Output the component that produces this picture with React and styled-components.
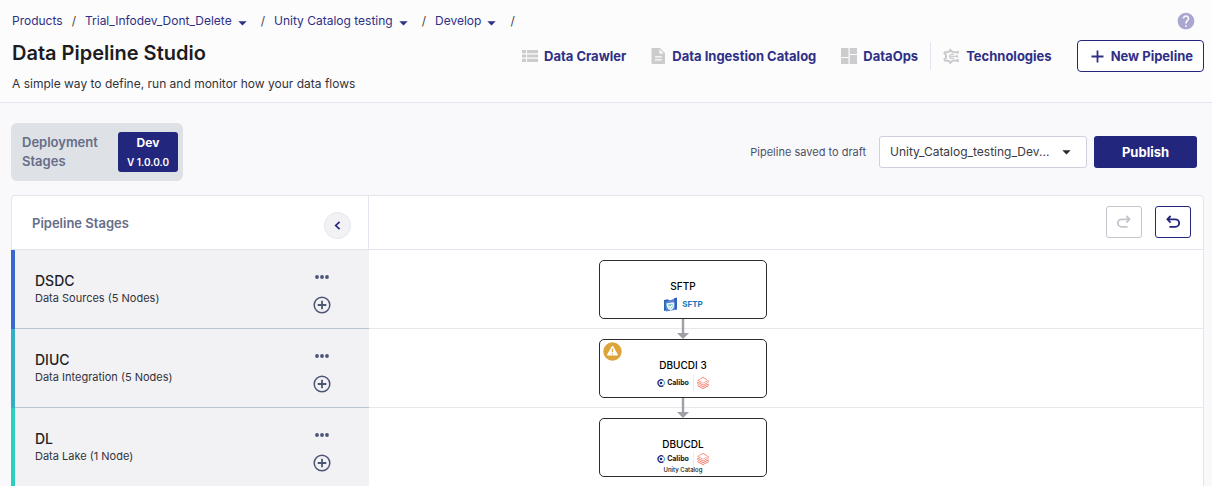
import React from 'react'
import styled, { createGlobalStyle, ThemeProvider } from 'styled-components'
import { MdHelp } from 'react-icons/md'
import { SiDatabricks } from 'react-icons/si'

const theme = {
  primary: '#23267d',
  link   : '#2f2f86',
  text   : '#1c1c22',
  muted  : '#666d88',
  icon   : '#4d5575',
  line   : '#e3e4ee',
  page   : '#f9f9fc'
}

const GlobalStyle = createGlobalStyle`
  * {
    box-sizing: border-box;
  }
  body {
    margin: 0;
    background: ${theme.page};
    color: ${theme.text};
    font-family: Inter, 'Liberation Sans', sans-serif;
  }
  button, select {
    font-family: inherit;
    cursor: pointer;
  }
  h1, h2, p, ol, ul {
    margin: 0;
    padding: 0;
  }
  svg {
    display: block;
    flex: none;
  }
`

const Page = styled.div`
  height: 100vh;
  display: flex;
  flex-direction: column;
  overflow: hidden;
`,
  Header = styled.header`
    flex: none;
    padding: 12px 8px 9px 12px;
    background: #fcfcfd;
    border-bottom: 1px solid ${theme.line};
  `,
  HeaderTop = styled.div`
    display: flex;
    justify-content: space-between;
    align-items: center;
    height: 18px;
    padding-right: 8px;
  `,
  Crumbs = styled.ol`
    display: flex;
    align-items: center;
    list-style: none;
    white-space: nowrap;
    font-size: 12px;
    line-height: 18px;
  `,
  Crumb = styled.li`
    display: flex;
    align-items: center;
  `,
  CrumbLink = styled.a`
    color: ${props => props.theme.link};
    text-decoration: none;
  `,
  CrumbMenu = styled.button`
    display: flex;
    padding: 4px 5px 0 6px;
    border: 0;
    background: none;
    color: ${props => props.theme.link};
  `,
  Slash = styled.span`
    margin: 0 9px;
    color: #44444c;
  `,
  HelpButton = styled.button`
    display: flex;
    padding: 0;
    border: 0;
    background: none;
    color: #a9a7cf;
  `,
  HeaderMain = styled.div`
    display: flex;
    justify-content: space-between;
    align-items: flex-start;
    padding-top: 10px;
  `,
  Title = styled.h1`
    font-size: 20px;
    font-weight: 600;
    line-height: 26px;
  `,
  Subtitle = styled.p`
    padding-top: 9px;
    font-size: 12px;
    line-height: 18px;
    color: #33333b;
  `,
  Tools = styled.nav`
    display: flex;
    align-items: center;
    gap: 25px;
  `,
  ToolLink = styled.a`
    display: flex;
    align-items: center;
    gap: 6px;
    font-size: 13px;
    font-weight: 700;
    color: ${props => props.theme.link};
    text-decoration: none;
    white-space: nowrap;

    svg {
      color: #cccccf;
    }
  `,
  ToolPair = styled.div`
    display: flex;
    align-items: center;
    gap: 12px;
  `,
  ToolDivider = styled.span`
    width: 1px;
    height: 28px;
    background: ${props => props.theme.line};
  `,
  NewButton = styled.button`
    display: flex;
    align-items: center;
    gap: 7px;
    height: 32px;
    padding: 0 10px 0 13px;
    border: 1px solid ${props => props.theme.primary};
    border-radius: 4px;
    background: #fff;
    color: ${props => props.theme.link};
    font-size: 13px;
    font-weight: 700;
    white-space: nowrap;
  `

const ActionBar = styled.section`
  flex: none;
  display: flex;
  justify-content: space-between;
  align-items: center;
  padding: 20px 15px 14px 11px;
`,
  Deployment = styled.div`
    display: flex;
    align-items: center;
    gap: 22px;
    height: 58px;
    padding: 0 5px 0 11px;
    border-radius: 6px;
    background: #dee1e6;
  `,
  DeploymentLabel = styled.span`
    width: 74px;
    font-size: 13px;
    font-weight: 600;
    line-height: 19px;
    color: ${props => props.theme.muted};
  `,
  StageButton = styled.button`
    display: flex;
    flex-direction: column;
    align-items: center;
    width: 60px;
    height: 40px;
    padding: 2px 0;
    border: 0;
    border-radius: 3px;
    background: ${props => props.theme.primary};
    color: #fff;
    font-size: 12px;
    font-weight: 700;
    line-height: 18px;
  `,
  StageVersion = styled.span`
    font-size: 10px;
    font-weight: 600;
    line-height: 20px;
  `,
  Actions = styled.div`
    display: flex;
    align-items: center;
    gap: 7px;
  `,
  SavedNote = styled.span`
    padding-right: 6px;
    font-size: 11px;
    color: #4c5166;
  `,
  SelectBox = styled.div`
    position: relative;

    svg {
      position: absolute;
      top: 14px;
      right: 16px;
      pointer-events: none;
    }
  `,
  Select = styled.select`
    appearance: none;
    width: 208px;
    height: 32px;
    padding: 0 30px 2px 10px;
    border: 1px solid #ced1db;
    border-radius: 3px;
    background: #fff;
    color: #3a3a45;
    font-size: 12px;
  `,
  PublishButton = styled.button`
    width: 103px;
    height: 32px;
    padding: 0 0 1px;
    border: 0;
    border-radius: 3px;
    background: ${props => props.theme.primary};
    color: #fff;
    font-size: 13px;
    font-weight: 700;
  `

const Panel = styled.main`
  flex: none;
  display: grid;
  grid-template-columns: 358px 1fr;
  margin: 0 8px 0 11px;
  border-top: 1px solid ${theme.line};
  border-radius: 4px 4px 0 0;
  background: #fff;
`,
  StagesHeader = styled.div`
    display: flex;
    justify-content: space-between;
    align-items: center;
    height: 54px;
    padding: 0 17px 0 20px;
    border: solid ${props => props.theme.line};
    border-width: 0 1px 1px 1px;
    border-radius: 4px 0 0 0;
  `,
  StagesTitle = styled.h2`
    font-size: 13px;
    font-weight: 600;
    color: ${props => props.theme.muted};
  `,
  CollapseButton = styled.button`
    display: flex;
    align-items: center;
    justify-content: center;
    width: 27px;
    height: 27px;
    margin-top: 6px;
    padding: 0;
    border: 1px solid ${props => props.theme.line};
    border-radius: 50%;
    background: #f2f2f5;
    color: ${props => props.theme.primary};
  `,
  CanvasHeader = styled.div`
    display: flex;
    justify-content: flex-end;
    align-items: center;
    gap: 13px;
    padding: 0 12px 1px 0;
    border: solid ${props => props.theme.line};
    border-width: 0 1px 1px 0;
    border-radius: 0 4px 0 0;
  `,
  HistoryButton = styled.button`
    display: flex;
    align-items: center;
    justify-content: center;
    width: 36px;
    height: 32px;
    padding: 0;
    border: 1px solid currentColor;
    border-radius: 3px;
    background: #fff;
    color: ${props => props.theme.primary};

    &:disabled {
      color: #c4c4cc;
    }
  `,
  StageList = styled.ul`
    list-style: none;
  `,
  StageRow = styled.li`
    display: flex;
    justify-content: space-between;
    height: 79px;
    padding: 22px 38px 0 20px;
    border-left: 4px solid ${props => props.accent};
    background: #f2f2f5;
    box-shadow: inset 0 -1px 0 #b9c3cf;
  `,
  StageName = styled.h2`
    font-size: 14px;
    font-weight: 500;
    line-height: 18px;
    color: #1f1f26;
  `,
  StageInfo = styled.p`
    font-size: 11px;
    line-height: 16px;
    color: #33333b;
  `,
  StageTools = styled.div`
    display: flex;
    flex-direction: column;
    gap: 16px;
    align-items: center;
    padding-top: 2px;
  `,
  IconButton = styled.button`
    display: flex;
    padding: 0;
    border: 0;
    background: none;
    color: ${props => props.theme.icon};
  `,
  Canvas = styled.div`
    position: relative;
    overflow: hidden;
    border-right: 1px solid ${props => props.theme.line};
  `,
  Lane = styled.div`
    height: 79px;
    border-bottom: 1px solid #e8e8ec;
  `,
  Node = styled.article`
    position: absolute;
    left: 230px;
    top: ${props => props.top}px;
    display: flex;
    flex-direction: column;
    align-items: center;
    width: 168px;
    height: 59px;
    padding-top: 18px;
    border: 1px solid #2b2b30;
    border-radius: 5px;
    background: #fff;
  `,
  NodeName = styled.span`
    font-size: 10px;
    font-weight: 500;
    line-height: 14px;
    color: #000;
  `,
  Logos = styled.div`
    display: flex;
    align-items: center;
    height: ${props => props.tall ? 22 : 16}px;
  `,
  SftpText = styled.span`
    padding-left: 4px;
    font-size: 8px;
    font-weight: 700;
    color: #1779c0;
  `,
  CaliboText = styled.span`
    padding: 0 4px 0 2px;
    font-size: 7px;
    font-weight: 700;
    line-height: 12px;
    color: #14142a;
  `,
  LogoDivider = styled.span`
    width: 1px;
    height: 16px;
    margin-right: 3px;
    background: #ececf0;
  `,
  NodeNote = styled.span`
    font-size: 6px;
    font-weight: 500;
    line-height: 6px;
    color: #111;
  `,
  Warning = styled.span`
    position: absolute;
    top: 2px;
    left: 3px;
  `,
  Arrow = styled.svg`
    position: absolute;
    left: 307px;
    top: ${props => props.$top}px;
  `

const Caret = ({ color = 'currentColor' }) => <svg width="9" height="5" viewBox="0 0 9 5" aria-hidden="true">
  <path d="M0.3 0.3H8.7L4.5 4.6Z" fill={color} />
</svg>

const ListIcon = () => <svg width="16" height="12" viewBox="0 0 16 12" fill="currentColor" aria-hidden="true">
  <path d="M0 0h4v3.3H0zM5 0h11v3.3H5zM0 4.4h4v3.2H0zM5 4.4h11v3.2H5zM0 8.7h4V12H0zM5 8.7h11V12H5z" />
</svg>

const FileIcon = () => <svg width="15" height="16" viewBox="0 0 15 16" fill="currentColor" aria-hidden="true">
  <path fillRule="evenodd" d="M1 0H9L14 5V15.2Q14 16 13.2 16H1.5Q.5 16 .5 15V.8Q.5 0 1 0ZM8.4 1.3V5.6H12.6ZM4 8.2V9.4H10.8V8.2ZM4 11.2V12.6H10.8V11.2Z" />
</svg>

const BoardIcon = () => <svg width="16" height="16" viewBox="0 0 16 16" fill="currentColor" aria-hidden="true">
  <path d="M0 0h7.5v9H0zM0 10h7.5v6H0zM8.7 0H16v6H8.7zM8.7 7H16v9H8.7z" />
</svg>

const TechIcon = () => <svg width="17" height="16" viewBox="0 0 17 16" fill="none" stroke="currentColor" strokeWidth="2" aria-hidden="true">
  <path d="M15.5 4.2H10.6L8.8 3.6 7.4 1.8 6 3.6 4.4 4.2 2.2 4 1.4 5.4 3 7.2V9.8L1.4 11.4 2.2 12.8 4.4 12.6 6 13.2 7.4 15 8.8 13.2 10.6 12.6H15.5" />
  <path d="M13 8.4H7M11 6.4H8.6A2 2 0 0 0 8.6 10.4H11" strokeWidth="1.2" />
  <path d="M14.8 2.9v2.6M14 7.2v2.4M14.8 11.3v2.6" strokeWidth="2.4" />
</svg>

const PlusIcon = () => <svg width="13" height="13" viewBox="0 0 13 13" stroke="currentColor" strokeWidth="1.8" aria-hidden="true">
  <path d="M6.5 0.5V12.5M0.5 6.5H12.5" />
</svg>

const UndoIcon = ({ redo }) => <svg width="14" height="14" viewBox="0 0 14 14" fill="none" stroke="currentColor" strokeWidth="1.8" aria-hidden="true">
  <path
    transform={redo ? 'matrix(-1 0 0 1 14 0)' : undefined}
    d="M4.6 1L1.4 4.3 4.6 7.6M1.4 4.3H9.4A3.7 3.7 0 0 1 9.4 11.8H3.4"
  />
</svg>

const ChevronIcon = () => <svg width="7" height="9" viewBox="0 0 7 9" fill="none" stroke="currentColor" strokeWidth="1.7" aria-hidden="true">
  <path d="M5.6 0.8L1.7 4.5 5.6 8.2" />
</svg>

const DotsIcon = () => <svg width="16" height="6" viewBox="0 0 16 6" fill="currentColor" aria-hidden="true">
  <circle cx="3" cy="3" r="1.9" />
  <circle cx="8" cy="3" r="1.9" />
  <circle cx="13" cy="3" r="1.9" />
</svg>

const AddIcon = () => <svg width="18" height="18" viewBox="0 0 18 18" fill="none" stroke="currentColor" aria-hidden="true">
  <circle cx="9" cy="9" r="7.8" strokeWidth="1.5" />
  <path d="M9 4.7V13.3M4.7 9H13.3" strokeWidth="1.8" />
</svg>

const WarningIcon = () => <svg width="19" height="19" viewBox="0 0 19 19" aria-hidden="true">
  <circle cx="9.5" cy="9.5" r="9.2" fill="#dca43a" />
  <path d="M9.5 4L14.6 13H4.4Z" fill="#fff" stroke="#fff" strokeLinejoin="round" />
  <path d="M9.5 6.8V10M9.5 11.2V12.4" stroke="#dca43a" strokeWidth="1.2" />
</svg>

const SftpIcon = () => <svg width="15" height="15" viewBox="0 0 15 15" aria-hidden="true">
  <path d="M1 3L5 2.2 6 3.4 10.5 2.6V12L1 14Z" fill="#2f67b8" />
  <path d="M2.5 5L14 1V12.5L3 14.5Z" fill="#5a83d6" />
  <path d="M11 1.2L14 0.5V12L12.2 13Z" fill="#365fc0" />
  <path d="M3.6 6.2L11.2 5.2V8.6Q11 12 7.6 13.6 4 12 3.6 8.6Z" fill="#e6f6f5" />
  <path d="M5.5 7.6L9.6 7V9Q9.4 10.8 7.6 11.6 5.6 10.6 5.5 9Z" fill="#5cbfae" />
  <path d="M6.2 9L7.4 10.4 9.2 7.8" fill="none" stroke="#fff" strokeWidth="1.2" />
</svg>

const CaliboIcon = () => <svg width="8" height="8" viewBox="0 0 8 8" fill="none" aria-hidden="true">
  <path d="M6.4 1.6A3.2 3.2 0 1 0 6.4 6.4" stroke="#23267d" strokeWidth="1.3" />
  <path d="M6.6 1.9A3.2 3.2 0 0 1 6.6 6.1" stroke="#46b8c4" strokeWidth="1.1" />
  <circle cx="4" cy="4" r="1.3" fill="#23267d" />
</svg>

const Connector = ({ top }) => <Arrow $top={top} width="14" height="20" viewBox="0 0 14 20" aria-hidden="true">
  <path d="M7 0V15" stroke="#a0a0a6" strokeWidth="2.4" />
  <path d="M1 14H13L7 20Z" fill="#a0a0a6" />
</Arrow>

const CaliboLogos = ({ tall }) => <Logos tall={tall ? 1 : undefined}>
  <CaliboIcon />
  <CaliboText>Calibo</CaliboText>
  <LogoDivider />
  <SiDatabricks size={12} color="#f4604c" />
</Logos>

const crumbs = [
  { label: 'Products' },
  { label: 'Trial_Infodev_Dont_Delete', menu: true },
  { label: 'Unity Catalog testing', menu: true },
  { label: 'Develop', menu: true }
]

const stages = [
  { name: 'DSDC', info: 'Data Sources (5 Nodes)', accent: '#3a68cc' },
  { name: 'DIUC', info: 'Data Integration (5 Nodes)', accent: '#33b0c8' },
  { name: 'DL', info: 'Data Lake (1 Node)', accent: '#2dcdc2' }
]

const PageHeader = () => <Header>
  <HeaderTop>
    <Crumbs>
      {crumbs.map(({ label, menu }) => <Crumb key={label}>
        <CrumbLink href="#">{label}</CrumbLink>
        {menu && <CrumbMenu aria-label={`${label} options`}><Caret /></CrumbMenu>}
        <Slash>/</Slash>
      </Crumb>)}
    </Crumbs>
    <HelpButton aria-label="Help"><MdHelp size={20} /></HelpButton>
  </HeaderTop>
  <HeaderMain>
    <div>
      <Title>Data Pipeline Studio</Title>
      <Subtitle>A simple way to define, run and monitor how your data flows</Subtitle>
    </div>
    <Tools>
      <ToolLink href="#"><ListIcon />Data Crawler</ToolLink>
      <ToolLink href="#"><FileIcon />Data Ingestion Catalog</ToolLink>
      <ToolPair>
        <ToolLink href="#"><BoardIcon />DataOps</ToolLink>
        <ToolDivider />
        <ToolLink href="#"><TechIcon />Technologies</ToolLink>
      </ToolPair>
      <NewButton><PlusIcon />New Pipeline</NewButton>
    </Tools>
  </HeaderMain>
</Header>

const PipelineActions = () => <ActionBar>
  <Deployment>
    <DeploymentLabel>Deployment Stages</DeploymentLabel>
    <StageButton>
      Dev
      <StageVersion>V 1.0.0.0</StageVersion>
    </StageButton>
  </Deployment>
  <Actions>
    <SavedNote>Pipeline saved to draft</SavedNote>
    <SelectBox>
      <Select aria-label="Pipeline">
        <option>Unity_Catalog_testing_Dev...</option>
      </Select>
      <Caret color="#2b2b33" />
    </SelectBox>
    <PublishButton>Publish</PublishButton>
  </Actions>
</ActionBar>

const App = () => <ThemeProvider theme={theme}>
  <GlobalStyle />
  <Page>
    <PageHeader />
    <PipelineActions />
    <Panel>
      <StagesHeader>
        <StagesTitle>Pipeline Stages</StagesTitle>
        <CollapseButton aria-label="Collapse stages"><ChevronIcon /></CollapseButton>
      </StagesHeader>
      <CanvasHeader>
        <HistoryButton disabled aria-label="Redo"><UndoIcon redo /></HistoryButton>
        <HistoryButton aria-label="Undo"><UndoIcon /></HistoryButton>
      </CanvasHeader>
      <StageList>
        {stages.map(({ name, info, accent }) => <StageRow key={name} accent={accent}>
          <div>
            <StageName>{name}</StageName>
            <StageInfo>{info}</StageInfo>
          </div>
          <StageTools>
            <IconButton aria-label={`${name} options`}><DotsIcon /></IconButton>
            <IconButton aria-label={`Add node to ${name}`}><AddIcon /></IconButton>
          </StageTools>
        </StageRow>)}
      </StageList>
      <Canvas>
        {stages.map(({ name }) => <Lane key={name} />)}
        <Node top={10}>
          <NodeName>SFTP</NodeName>
          <Logos tall={1}>
            <SftpIcon />
            <SftpText>SFTP</SftpText>
          </Logos>
        </Node>
        <Connector top={69} />
        <Node top={89}>
          <Warning><WarningIcon /></Warning>
          <NodeName>DBUCDI 3</NodeName>
          <CaliboLogos tall />
        </Node>
        <Connector top={148} />
        <Node top={168}>
          <NodeName>DBUCDL</NodeName>
          <CaliboLogos />
          <NodeNote>Unity Catalog</NodeNote>
        </Node>
      </Canvas>
    </Panel>
  </Page>
</ThemeProvider>

export default App
